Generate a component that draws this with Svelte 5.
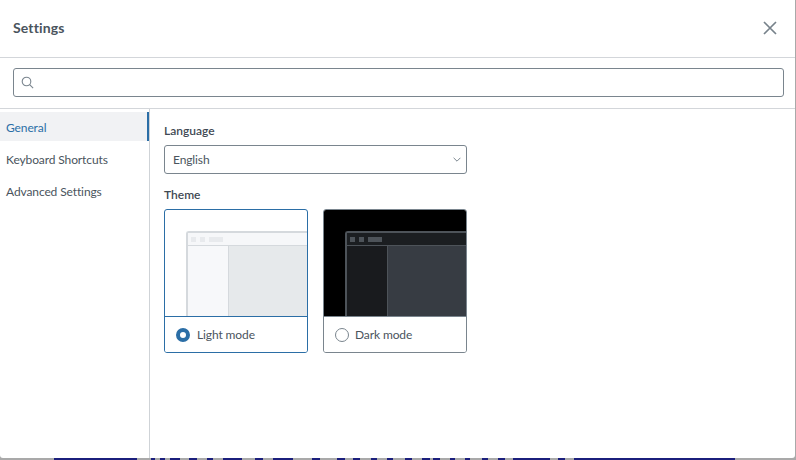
<script>
  const gaps = [
    [54, 137], [151, 155], [160, 165], [170, 180], [189, 197], [207, 213], [223, 242], [255, 263], [273, 293], [312, 320], [337, 345],
    [353, 360], [371, 377], [387, 393], [405, 412], [422, 430], [433, 440], [450, 455], [465, 470], [482, 488], [498, 505], [513, 550], [558, 565], [574, 735]
  ];
</script>

<div class="page">
  <div class="dialog">
    <header class="head">
      <h1>Settings</h1>
      <button class="close" aria-label="Close">
        <svg width="16" height="16" viewBox="0 0 16 16"><path d="M2 2l12 12M14 2L2 14" /></svg>
      </button>
    </header>
    <div class="searchbar">
      <div class="search">
        <svg width="13" height="13" viewBox="0 0 13 13"><circle cx="5.5" cy="5.5" r="4.3" /><path d="M8.7 8.7l3.4 3.4" /></svg>
      </div>
    </div>
    <div class="body">
      <nav class="side">
        <div class="item active">General</div>
        <div class="item">Keyboard Shortcuts</div>
        <div class="item">Advanced Settings</div>
      </nav>
      <main class="content">
        <div class="label">Language</div>
        <div class="select">
          <span>English</span>
          <svg width="8" height="5" viewBox="0 0 8 5"><path d="M.6.8l3.4 3.4L7.4.8" /></svg>
        </div>
        <div class="label theme">Theme</div>
        <div class="cards">
          <div class="card selected">
            <div class="preview light">
              <div class="win">
                <div class="bar"><i></i><i></i><b></b></div>
                <div class="panes"><div class="left"></div><div class="right"></div></div>
              </div>
            </div>
            <div class="opt"><span class="radio on"></span>Light mode</div>
          </div>
          <div class="card">
            <div class="preview dark">
              <div class="win">
                <div class="bar"><i></i><i></i><b></b></div>
                <div class="panes"><div class="left"></div><div class="right"></div></div>
              </div>
            </div>
            <div class="opt"><span class="radio"></span>Dark mode</div>
          </div>
        </div>
      </main>
    </div>
  </div>
  <svg class="strip" width="796" height="2" viewBox="0 0 796 2">
    {#each gaps as [a, b]}
      <rect x={a} y="0" width={b - a} height="2" />
    {/each}
  </svg>
</div>

<style>
  :global(body) { margin: 0; background: #a9a9a9; }
  .page {
    width: 796px;
    height: 460px;
    overflow: hidden;
    font-family: Lato, "Liberation Sans", sans-serif;
    color: #2d3b45;
  }
  .dialog {
    width: 795px;
    height: 458px;
    background: #fff;
    display: flex;
    flex-direction: column;
    border-radius: 0 0 3px 3px;
  }
  .strip { display: block; fill: #1b1f7c; }
  .head {
    flex: none;
    display: flex;
    align-items: center;
    justify-content: space-between;
    padding: 0 17px 2px 13px;
    box-sizing: border-box;
    border-bottom: 1px solid #d3d6da;
    height: 58px;
  }
  h1 { margin: 0; font-size: 14px; font-weight: 700; color: #4a545d; letter-spacing: 0.15px; }
  .close { border: 0; padding: 0; background: none; display: flex; }
  .close path { stroke: #77828b; stroke-width: 1.7; fill: none; }
  .searchbar {
    height: 51px;
    flex: none;
    box-sizing: border-box;
    padding: 10px 11px 0 13px;
    border-bottom: 1px solid #d3d6da;
  }
  .search {
    height: 29px;
    box-sizing: border-box;
    border: 1px solid #7a858e;
    border-radius: 3px;
    display: flex;
    align-items: center;
    padding-left: 7px;
  }
  .search svg { fill: none; stroke: #7a858e; stroke-width: 1.1; }
  .body { flex: 1; display: flex; min-height: 0; }
  .side {
    width: 150px;
    flex: none;
    box-sizing: border-box;
    border-right: 1px solid #cfd3d7;
    padding-top: 3px;
    display: flex;
    flex-direction: column;
    gap: 3px;
  }
  .item {
    height: 29px;
    line-height: 31px;
    padding-left: 6px;
    font-size: 12px;
    letter-spacing: -0.11px;
    color: #4a545d;
  }
  .item.active {
    background: #f1f2f4;
    color: #2b6ea6;
    border-right: 2px solid #2b6ea6;
  }
  .content { flex: 1; padding: 14px 0 0 14px; }
  .label { font-size: 12px; font-weight: 600; line-height: 16px; color: #3f4a54; }
  .select {
    width: 303px;
    height: 29px;
    margin-top: 6px;
    box-sizing: border-box;
    border: 1px solid #7a858e;
    border-radius: 3px;
    display: flex;
    align-items: center;
    justify-content: space-between;
    padding: 0 5px 0 8px;
    font-size: 12px;
    letter-spacing: -0.11px;
    color: #4a545d;
  }
  .select svg { fill: none; stroke: #7a858e; stroke-width: 1; }
  .theme { margin-top: 13px; }
  .cards { display: flex; gap: 15px; margin-top: 6px; }
  .card {
    width: 144px;
    height: 144px;
    box-sizing: border-box;
    border: 1px solid #7a858e;
    border-radius: 3px;
    overflow: hidden;
    display: flex;
    flex-direction: column;
  }
  .card.selected { border-color: #2b6ea6; }
  .preview {
    height: 107px;
    flex: none;
    box-sizing: border-box;
    padding: 21px 0 0 21px;
    overflow: hidden;
  }
  .selected .preview { border-bottom: 1px solid #2b6ea6; }
  .preview.dark { background: #000; border-bottom: 1px solid #7a858e; }
  .win {
    height: 100%;
    box-sizing: border-box;
    border: 2px solid #d5d9dd;
    border-right: 0;
    border-bottom: 0;
    border-radius: 3px 0 0 0;
    display: flex;
    flex-direction: column;
  }
  .dark .win { border-color: #4d5359; }
  .bar {
    height: 12px;
    flex: none;
    background: #f6f7f9;
    border-bottom: 1px solid #d5d9dd;
    display: flex;
    align-items: center;
    gap: 4px;
    padding-left: 3px;
  }
  .dark .bar { background: #1b1e21; border-color: #4d5359; }
  .bar i { width: 5px; height: 5px; background: #e8eaed; }
  .bar b { width: 14px; height: 5px; background: #e8eaed; }
  .dark .bar i, .dark .bar b { background: #4d5359; }
  .panes { flex: 1; display: flex; min-height: 0; }
  .left { width: 40px; background: #f7f8fa; border-right: 1px solid #d5d9dd; }
  .right { flex: 1; background: #e6e9eb; }
  .dark .left { background: #191b1e; border-color: #4d5359; }
  .dark .right { background: #373c43; }
  .opt {
    flex: 1;
    display: flex;
    align-items: center;
    gap: 7px;
    padding-left: 11px;
    font-size: 12px;
    letter-spacing: -0.11px;
    color: #4a545d;
    background: #fff;
  }
  .card:not(.selected) .opt { gap: 6px; }
  .radio {
    width: 14px;
    height: 14px;
    box-sizing: border-box;
    border-radius: 50%;
    border: 1px solid #7a858e;
    background: #fff;
  }
  .radio.on { border: 4.5px solid #2b6ea6; }
</style>
